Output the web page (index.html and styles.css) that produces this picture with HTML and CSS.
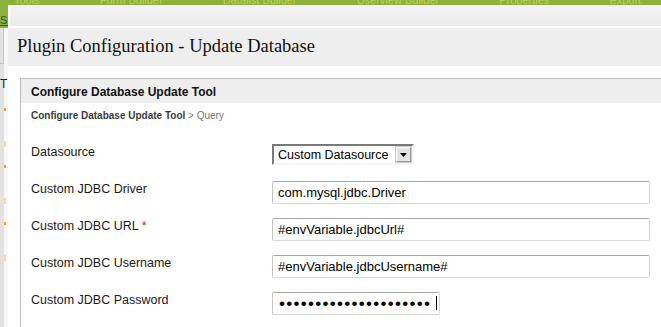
FILE: index.html
```html
<!DOCTYPE html>
<html lang="en">
<head>
  <meta charset="UTF-8" />
  <title>Plugin Configuration - Update Database</title>
  <link rel="stylesheet" href="styles.css">
</head>
<body>
<div class="page">
  <div class="topbar">
    <span>Tools</span><span>Form Builder</span><span>Datalist Builder</span><span>Userview Builder</span><span>Properties</span><span>Export</span>
  </div>
  <div class="page-main">
    <div class="sidebar">
      <div class="side-link">SI</div>
      <div class="side-box"></div>
      <div class="side-t">T</div>
      <div class="side-item"></div>
      <div class="side-item"></div>
      <div class="side-item"></div>
    </div>
  </div>
</div>

<div class="dialog">
  <div class="dialog-bar"></div>
  <h1 class="dialog-title">Plugin Configuration - Update Database</h1>
  <div class="panel">
    <div class="panel-head">Configure Database Update Tool</div>
    <div class="panel-body">
      <div class="crumbs"><b>Configure Database Update Tool</b> &gt; Query</div>

      <div class="form">
        <div class="row">
          <label>Datasource</label>
          <div class="select-box">
            <select>
              <option>Custom Datasource</option>
            </select>
            <span class="select-btn">
              <svg width="7" height="4" viewBox="0 0 7 4"><path d="M0 0h7L3.5 4z" fill="#000"/></svg>
            </span>
          </div>
        </div>
        <div class="row">
          <label>Custom JDBC Driver</label>
          <input type="text" class="field" value="com.mysql.jdbc.Driver" />
        </div>
        <div class="row">
          <label>Custom JDBC URL <span class="req">*</span></label>
          <input type="text" class="field" value="#envVariable.jdbcUrl#" />
        </div>
        <div class="row">
          <label>Custom JDBC Username</label>
          <input type="text" class="field" value="#envVariable.jdbcUsername#" />
        </div>
        <div class="row">
          <label>Custom JDBC Password</label>
          <span class="pw"><input type="password" class="field pw-field" value="secretpassword1234567" /></span>
        </div>
      </div>
    </div>
  </div>
</div>
</body>
</html>
```

FILE: styles.css
```css
html, body {
  margin: 0;
  height: 100%;
  overflow: hidden;
  background-color: #f4f4f4;
  font-family: "Liberation Sans", Arial, sans-serif;
}

/* page behind the dialog */
.page {
  height: 100%;
  display: flex;
  flex-direction: column;
}

.topbar {
  height: 5px;
  background-color: #8cb23c;
  display: flex;
  gap: 60px;
  padding-left: 14px;
  overflow: hidden;
  font-size: 11px;
  line-height: 0;
  color: #b9d256;
  white-space: nowrap;
}

.page-main {
  flex: 1;
  display: flex;
}

.sidebar {
  width: 8px;
  display: flex;
  flex-direction: column;
  background: linear-gradient(to right, #e2e2e2 0, #e2e2e2 4px, #f7f7f7 4px);
}

.side-link {
  height: 23px;
  background-color: #8cb23c;
  color: #1f5a1a;
  font-size: 11px;
  line-height: 30px;
  text-decoration: underline;
  overflow: hidden;
}

.side-box {
  height: 35px;
  border-right: 1px solid #c8c8c8;
  border-bottom: 1px solid #c8c8c8;
  width: 3px;
}

.side-t {
  margin-top: 14px;
  font-size: 12px;
  line-height: 12px;
  color: #222;
  overflow: hidden;
}

.side-item {
  margin-top: 18px;
  height: 30px;
  width: 2px;
  margin-left: 4px;
  border-top: 3px solid #f0a030;
  border-bottom: 6px solid #f7d7a8;
}

/* dialog window over the page */
.dialog {
  position: absolute;
  left: 8px;
  top: 5px;
  right: 0;
  bottom: 0;
  background-color: #fff;
  padding-top: 1px;
}

.dialog-bar {
  height: 20px;
  margin-left: 2px;
  margin-bottom: 2px;
  border-top-left-radius: 4px;
  background: linear-gradient(#f3f3f3, #ececec);
}

.dialog-title {
  margin: 0;
  height: 38px;
  padding-left: 9px;
  background-color: #eeeeee;
  font-family: "Liberation Serif", "Times New Roman", serif;
  font-size: 18.5px;
  font-weight: normal;
  line-height: 37px;
  color: #111;
}

.panel {
  margin: 12px 0 0 12px;
  border-top: 1px solid #bdbdbd;
  border-left: 1px solid #bdbdbd;
}

.panel-head {
  height: 24px;
  padding-left: 10px;
  background-color: #eeeeee;
  font-size: 12px;
  font-weight: bold;
  line-height: 26px;
  color: #111;
}

.panel-body {
  padding: 6px 0 0 10px;
}

.crumbs {
  font-size: 10px;
  line-height: 14px;
  color: #777;
}

.crumbs b {
  color: #3a3a3a;
}

.form {
  margin-top: 20px;
}

.row {
  display: grid;
  grid-template-columns: 241px 378px;
  height: 37px;
  align-items: start;
}

.row label {
  padding-top: 1px;
  font-size: 12.5px;
  line-height: 16px;
  color: #1a1a1a;
}

.req {
  color: #e02020;
}

.select-box {
  margin-top: 1px;
  display: flex;
  align-items: center;
  width: 142px;
  height: 21px;
  box-sizing: border-box;
  border: 2px solid #f6f6f6;
  border-top-color: #7a7a7a;
  border-left-color: #7a7a7a;
  background-color: #fff;
}

.select-box select {
  flex: 1;
  min-width: 0;
  appearance: none;
  -webkit-appearance: none;
  border: none;
  outline: none;
  background: transparent;
  padding: 0 0 0 4px;
  font-family: "Liberation Sans", Arial, sans-serif;
  font-size: 12.5px;
  color: #000;
}

.select-btn {
  width: 15px;
  height: 15px;
  margin-right: 1px;
  box-sizing: border-box;
  display: flex;
  align-items: center;
  justify-content: center;
  background-color: #e4e4e4;
  border: 1px solid #9a9a9a;
  border-top-color: #fff;
  border-left-color: #fff;
  outline: 1px solid #c8c8c8;
}

.field {
  margin: 1px 0 0 0;
  width: 378px;
  height: 23px;
  box-sizing: border-box;
  padding: 0 5px;
  border: 1px solid #d8d8d8;
  border-top-color: #a8a8a8;
  border-left-color: #c4c4c4;
  border-radius: 2px;
  font-family: "Liberation Sans", Arial, sans-serif;
  font-size: 13px;
  color: #000;
  outline: none;
}

.pw {
  position: relative;
  display: block;
  width: 168px;
}

.pw-field {
  width: 168px;
  padding: 0 6px 0 6px;
  font-size: 17px;
  letter-spacing: 1.3px;
}

.pw::after {
  content: "";
  position: absolute;
  left: 164px;
  top: 5px;
  width: 1px;
  height: 14px;
  background-color: #000;
}
```
